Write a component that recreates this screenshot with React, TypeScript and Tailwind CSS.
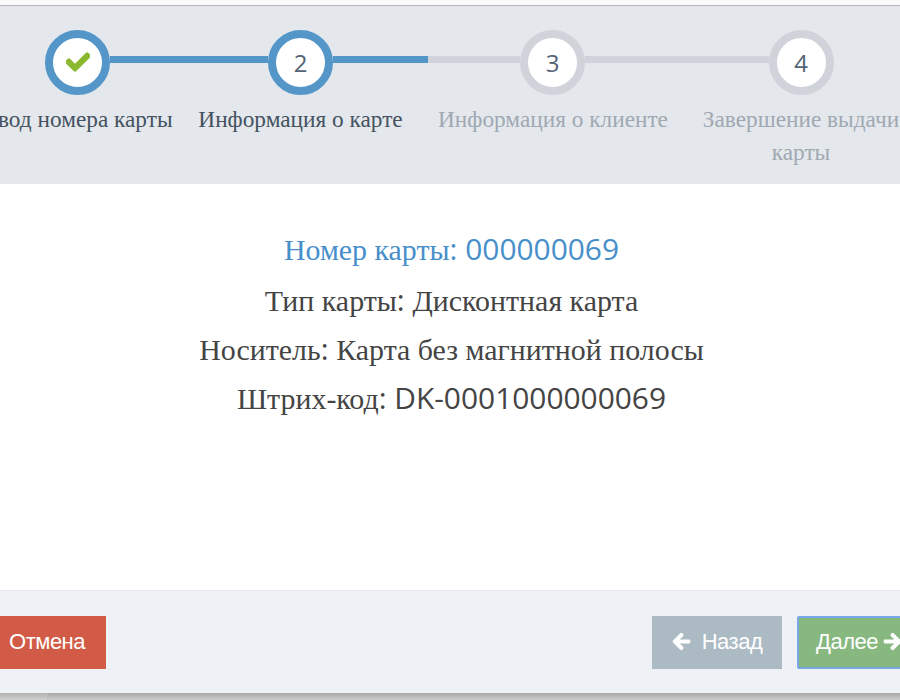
import React from 'react';
import { FaArrowLeft, FaArrowRight, FaCheck } from 'react-icons/fa';

const serif = 'font-["Liberation_Serif",serif]';
const sans = 'font-["Open_Sans",sans-serif]';
const btnFont = 'font-["Liberation_Sans",sans-serif] text-[22px] tracking-[-0.5px] text-white';

// Thick connector piece between two step circles
const Line: React.FC<{ className: string }> = ({ className }) => (
  <div className={`mt-[26px] h-[7px] ${className}`} />
);

const Circle: React.FC<{ active: boolean; children: React.ReactNode }> = ({ active, children }) => (
  <div
    className={`flex h-[65px] w-[65px] shrink-0 items-center justify-center rounded-full border-[8px] bg-white ${
      active ? 'border-[#5496c8]' : 'border-[#d0d4da]'
    }`}
  >
    {children}
  </div>
);

const Num: React.FC<{ n: number }> = ({ n }) => (
  <span className={`${sans} text-[24px] leading-none text-[#546474]`}>{n}</span>
);

const StepLabel: React.FC<{ muted?: boolean; children: React.ReactNode }> = ({ muted, children }) => (
  <div
    className={`${serif} mt-[8px] text-center text-[23.3px] leading-[33px] ${muted ? 'text-[#a0a8b2]' : 'text-[#45525f]'}`}
  >
    {children}
  </div>
);

const Row: React.FC<{ label: string; children: React.ReactNode }> = ({ label, children }) => (
  <p className="h-[49px] text-[29.9px] leading-[49px] text-[#444444]">
    <span className={serif}>{label}</span>
    <span className={sans}>: </span>
    {children}
  </p>
);

export default function App() {
  return (
    <div className="flex h-[700px] w-[900px] flex-col overflow-hidden bg-[#c8c8c8]">
      <div className="h-[5px] shrink-0 bg-[#fafafa]" />
      <div className="flex h-[688px] shrink-0 flex-col border-t border-[#b4b4b4] bg-white">
        {/* Steps */}
        <div className="flex h-[178px] shrink-0 items-start overflow-hidden bg-[#e4e8ed] pt-[24px]">
          <div className="-ml-[35px] w-[225px] shrink-0">
            <div className="flex items-start">
              <div className="w-[80px] shrink-0" />
              <Circle active>
                <FaCheck size={24} color="#8ab82e" stroke="#8ab82e" strokeWidth={30} className="-mt-[1px]" />
              </Circle>
              <Line className="flex-1 bg-[#5496c8]" />
            </div>
            <StepLabel>Ввод номера карты</StepLabel>
          </div>
          <div className="w-[221px] shrink-0">
            <div className="flex items-start">
              <Line className="flex-1 bg-[#5496c8]" />
              <Circle active>
                <Num n={2} />
              </Circle>
              <Line className="flex-1 bg-[#5496c8]" />
            </div>
            <StepLabel>Информация о карте</StepLabel>
          </div>
          <div className="w-[284px] shrink-0">
            <div className="flex items-start">
              <Line className="w-[17px] bg-[#5496c8]" />
              <Line className="w-[92px] bg-[#d0d4da]" />
              <Circle active={false}>
                <Num n={3} />
              </Circle>
              <Line className="flex-1 bg-[#d0d4da]" />
            </div>
            <StepLabel muted>Информация о клиенте</StepLabel>
          </div>
          <div className="w-[212px] shrink-0">
            <div className="flex items-start">
              <Line className="flex-1 bg-[#d0d4da]" />
              <Circle active={false}>
                <Num n={4} />
              </Circle>
              <div className="flex-1" />
            </div>
            <StepLabel muted>Завершение выдачи карты</StepLabel>
          </div>
        </div>

        {/* Card info */}
        <div className="flex flex-1 flex-col items-center pl-[3px] pt-[40px] text-center">
          <p className="h-[51px] text-[29.9px] leading-[50px] text-[#478fca]">
            <span className={serif}>Номер карты</span>
            <span className={sans}>: 000000069</span>
          </p>
          <Row label="Тип карты">
            <span className={serif}>Дисконтная карта</span>
          </Row>
          <Row label="Носитель">
            <span className={serif}>Карта без магнитной полосы</span>
          </Row>
          <Row label="Штрих-код">
            <span className={sans}>DK-0001000000069</span>
          </Row>
        </div>

        {/* Footer */}
        <div className="flex h-[103px] shrink-0 items-center border-t border-[#e4e8ed] bg-[#eef1f6]">
          <button className={`flex h-[53px] w-[106px] items-center justify-end bg-[#d15b47] pb-[1px] pr-[21px] ${btnFont}`}>
            Отмена
          </button>
          <div className="flex-1" />
          <button className={`mr-[15px] flex h-[53px] w-[130px] items-center justify-center gap-[11px] bg-[#abbac3] pb-[1px] ${btnFont}`}>
            <FaArrowLeft size={19} stroke="white" strokeWidth={30} />
            Назад
          </button>
          <button
            className={`-mr-[20px] flex h-[53px] w-[123px] shrink-0 items-center justify-start gap-[5px] rounded-[2px] border-2 border-[#7aa7e8] bg-[#87b87f] pb-[1px] pl-[17px] ${btnFont}`}
          >
            Далее
            <FaArrowRight size={19} stroke="white" strokeWidth={30} className="shrink-0" />
          </button>
        </div>
      </div>
      {/* Page behind the dialog, with the dialog's shadow on it */}
      <div className="flex flex-1 bg-gradient-to-b from-[#a9a9a9] to-[#cbcbcb]">
        <div className="w-[48px] border-r border-[#bdbdbd] bg-white/10" />
      </div>
    </div>
  );
}
